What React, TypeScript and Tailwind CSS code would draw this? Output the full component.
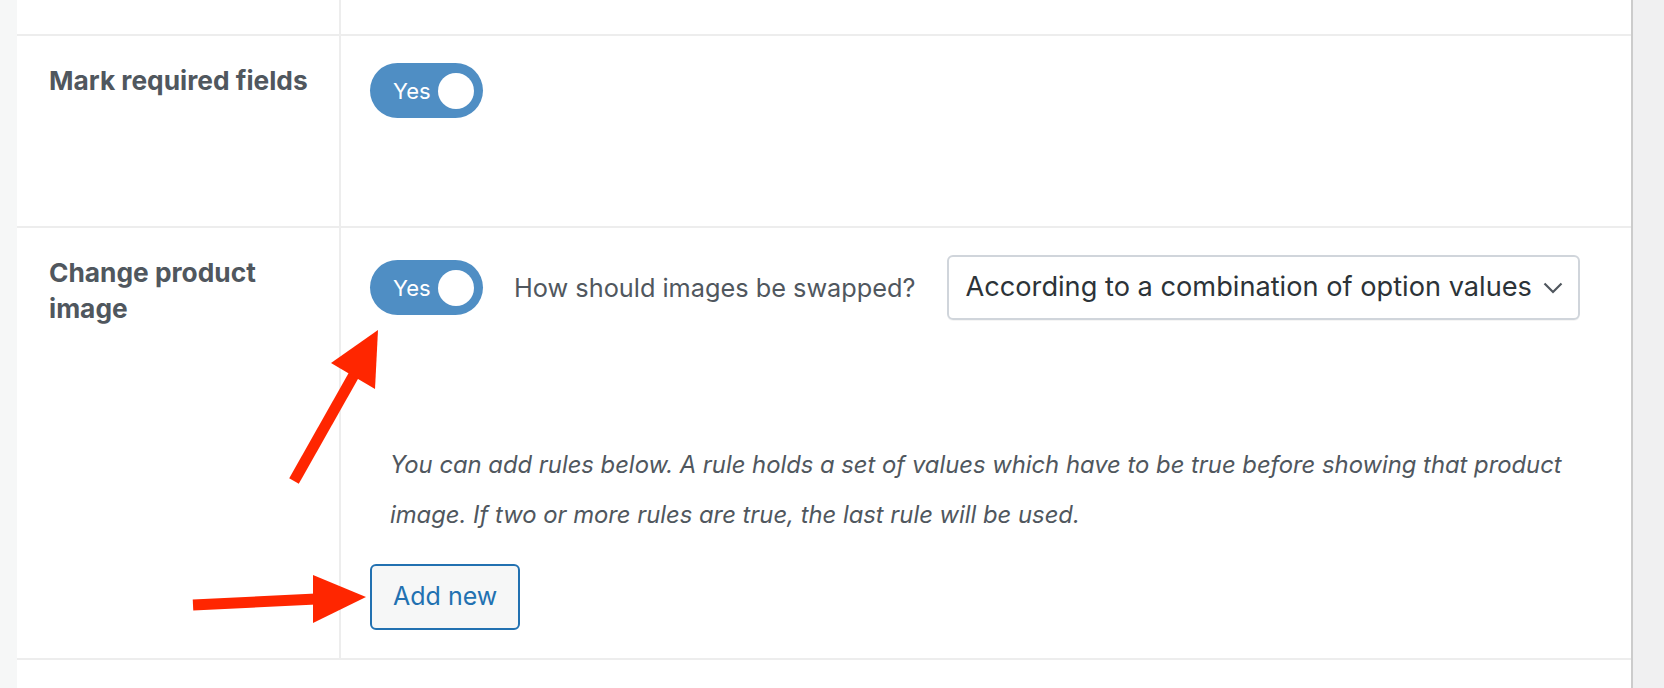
import React from "react";

const font = { fontFamily: "Inter, 'Noto Sans', sans-serif" };

const Toggle: React.FC = () => (
  <div className="flex h-[55px] w-[113px] shrink-0 items-center justify-between rounded-full bg-[#4f8ec4] pl-[23px] pr-[9px]">
    <span className="text-[22px] leading-none text-white">Yes</span>
    <span className="h-[36px] w-[36px] rounded-full bg-white" />
  </div>
);

const Arrows: React.FC = () => (
  <svg
    className="pointer-events-none absolute left-0 top-0"
    width="1664"
    height="688"
    viewBox="0 0 1664 688"
  >
    <line x1="355" y1="373" x2="294" y2="481" stroke="#ff2600" strokeWidth="11" />
    <polygon points="378,330 331,363 375,389" fill="#ff2600" />
    <line x1="193" y1="605" x2="316" y2="599" stroke="#ff2600" strokeWidth="11" />
    <polygon points="313,575 366,597 313,623" fill="#ff2600" />
  </svg>
);

export default function App() {
  return (
    <div className="relative flex h-[688px] w-full overflow-hidden bg-[#f0f0f1]" style={font}>
      <div className="w-[17px] shrink-0 bg-[#f6f7f7]" />
      <div className="flex w-[1616px] shrink-0 flex-col border-r-2 border-[#cccccc] bg-white">
        {/* previous row (cut off) */}
        <div className="flex h-[36px] shrink-0 border-b-2 border-[#ededed]">
          <div className="w-[324px] shrink-0 border-r-2 border-[#ededed]" />
          <div className="flex-1" />
        </div>

        {/* Mark required fields */}
        <div className="flex h-[192px] shrink-0 border-b-2 border-[#ededed]">
          <div className="w-[324px] shrink-0 border-r-2 border-[#ededed] pl-[32px] pr-[24px] pt-[27px]">
            <div className="text-[26.3px] font-bold leading-[36px] text-[#50575e]">
              Mark required fields
            </div>
          </div>
          <div className="flex-1 pl-[29px] pt-[27px]">
            <Toggle />
          </div>
        </div>

        {/* Change product image */}
        <div className="flex h-[432px] shrink-0 border-b-2 border-[#ededed]">
          <div className="w-[324px] shrink-0 border-r-2 border-[#ededed] pl-[32px] pr-[24px] pt-[27px]">
            <div className="text-[26.3px] font-bold leading-[36px] text-[#50575e]">
              Change product image
            </div>
          </div>
          <div className="flex flex-1 flex-col pl-[29px] pr-[32px] pt-[27px]">
            <div className="flex items-center">
              <Toggle />
              <span className="ml-[31px] text-[25.3px] text-[#50575e]">
                How should images be swapped?
              </span>
              <div className="ml-[32px] flex h-[65px] w-[633px] items-center justify-between rounded-[6px] border-2 border-[#d0d5db] pl-[16px] pr-[15px] shadow-[0_1px_0_rgba(0,0,0,0.04)]">
                <span className="text-[27.2px] text-[#2c3338]">
                  According to a combination of option values
                </span>
                <svg width="20" height="12" viewBox="0 0 20 12" fill="none">
                  <path d="M1.5 1.5 L10 10 L18.5 1.5" stroke="#50575e" strokeWidth="2.2" />
                </svg>
              </div>
            </div>
            <p className="ml-[20px] mt-[120px] text-[23.8px] italic leading-[50px] text-[#50575e]">
              You can add rules below. A rule holds a set of values which have to be true before
              showing that product image. If two or more rules are true, the last rule will be used.
            </p>
            <div className="mt-[24px]">
              <button className="h-[66px] rounded-[6px] border-2 border-[#2271b1] bg-[#f6f7f7] px-[21px] text-[25px] text-[#2271b1]">
                Add new
              </button>
            </div>
          </div>
        </div>

        <div className="flex-1" />
      </div>
      <div className="flex-1" />
      <Arrows />
    </div>
  );
}
